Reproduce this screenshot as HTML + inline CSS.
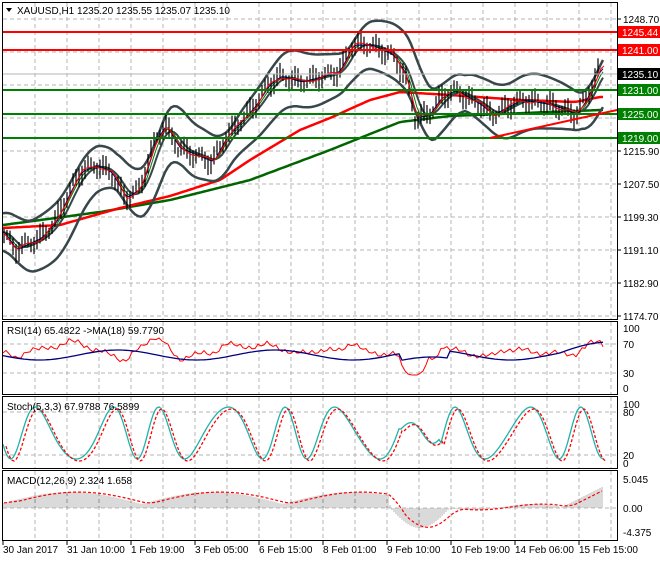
<!DOCTYPE html>
<html><head><meta charset="utf-8"><style>
html,body{margin:0;padding:0;background:#fff;}
body{width:660px;height:560px;overflow:hidden;font-family:"Liberation Sans",sans-serif;}
svg text{font-family:"Liberation Sans",sans-serif;font-size:10px;}
</style></head><body>
<svg id="c" width="660" height="560" xmlns="http://www.w3.org/2000/svg">
<rect width="660" height="560" fill="#fff"/>
<g id="grid" stroke="#b4b4b4" stroke-dasharray="4,3" stroke-width="1"></g>
<g id="plots"></g>
<line x1="3" y1="32" x2="617" y2="32" stroke="#f00" stroke-width="2"/>
<line x1="3" y1="50" x2="617" y2="50" stroke="#f00" stroke-width="2"/>
<line x1="3" y1="74" x2="617" y2="74" stroke="#b4b4b4" stroke-width="1"/>
<line x1="3" y1="90" x2="617" y2="90" stroke="#008000" stroke-width="2"/>
<line x1="3" y1="114" x2="617" y2="114" stroke="#008000" stroke-width="2"/>
<line x1="3" y1="138" x2="617" y2="138" stroke="#008000" stroke-width="2"/>
<line x1="490" y1="138" x2="617" y2="110" stroke="#f00" stroke-width="2"/>
<g fill="none" stroke="#000" stroke-width="1">
<rect x="2.5" y="2.5" width="615" height="317"/>
<rect x="2.5" y="321.5" width="615" height="73"/>
<rect x="2.5" y="396.5" width="615" height="72"/>
<rect x="2.5" y="470.5" width="615" height="70"/>
</g>
<path d="M6 8 L12 8 L9 12 Z" fill="#000"/>
<text x="17" y="14">XAUUSD,H1  1235.20 1235.55 1235.07 1235.10</text>
<text x="7" y="334">RSI(14) 65.4822  -&gt;MA(18) 59.7790</text>
<text x="7" y="410">Stoch(5,3,3) 67.9788 76.5899</text>
<text x="7" y="484">MACD(12,26,9) 2.324 1.658</text>
<g stroke="#000"><line x1="617" y1="19" x2="621" y2="19"/><line x1="617" y1="151" x2="621" y2="151"/><line x1="617" y1="184" x2="621" y2="184"/><line x1="617" y1="217" x2="621" y2="217"/><line x1="617" y1="250" x2="621" y2="250"/><line x1="617" y1="283" x2="621" y2="283"/><line x1="617" y1="316" x2="621" y2="316"/></g>
<g>
<text x="623" y="23">1248.70</text>
<text x="623" y="155">1215.90</text>
<text x="623" y="188">1207.50</text>
<text x="623" y="221">1199.30</text>
<text x="623" y="254">1191.10</text>
<text x="623" y="287">1182.90</text>
<text x="623" y="320">1174.70</text>
<rect x="618" y="26" width="42" height="12" fill="#f00"/><text x="622" y="36" fill="#fff">1245.44</text>
<rect x="618" y="44" width="42" height="12" fill="#f00"/><text x="622" y="54" fill="#fff">1241.00</text>
<rect x="618" y="68" width="42" height="12" fill="#000"/><text x="622" y="78" fill="#fff">1235.10</text>
<rect x="618" y="84" width="42" height="12" fill="#008000"/><text x="622" y="94" fill="#fff">1231.00</text>
<rect x="618" y="108" width="42" height="12" fill="#008000"/><text x="622" y="118" fill="#fff">1225.00</text>
<rect x="618" y="132" width="42" height="12" fill="#008000"/><text x="622" y="142" fill="#fff">1219.00</text>
<text x="623" y="332">100</text><text x="623" y="348">70</text><text x="623" y="377">30</text><text x="623" y="392">0</text>
<text x="623" y="408">100</text><text x="623" y="416">80</text><text x="623" y="459">20</text><text x="623" y="467">0</text>
<text x="623" y="483">5.045</text><text x="623" y="512">0.00</text><text x="623" y="536">-4.375</text>
</g>
<g id="taxis"></g>
</svg>
<script>
var NS="http://www.w3.org/2000/svg";
function el(p,t,a){var e=document.createElementNS(NS,t);for(var k in a)e.setAttribute(k,a[k]);p.appendChild(e);return e;}
var grid=document.getElementById('grid'),plots=document.getElementById('plots'),tx=document.getElementById('taxis');
for(var x=35;x<617;x+=32){[[3,319],[322,394],[397,468],[471,540]].forEach(function(r){el(grid,'line',{x1:x,y1:r[0],x2:x,y2:r[1]});});}
[19,52,85,118,151,184,217,250,283,316,344,373,412,455,508].forEach(function(y){el(grid,'line',{x1:3,y1:y,x2:617,y2:y});});
var labs=["30 Jan 2017","31 Jan 10:00","1 Feb 19:00","3 Feb 05:00","6 Feb 15:00","8 Feb 01:00","9 Feb 10:00","10 Feb 19:00","14 Feb 06:00","15 Feb 15:00"];
labs.forEach(function(l,i){var x=3+i*64;el(tx,'line',{x1:x,y1:540,x2:x,y2:545,stroke:'#000'});var t=el(tx,'text',{x:x,y:553});t.textContent=l;});
function interp(K,x){if(x<=K[0][0])return K[0][1];for(var i=0;i<K.length-1;i++){if(x<=K[i+1][0]){var a=K[i],b=K[i+1];return a[1]+(b[1]-a[1])*(x-a[0])/(b[0]-a[0]);}}return K[K.length-1][1];}
var K=[[3,232],[15,250],[25,245],[40,238],[55,222],[70,190],[80,172],[95,165],[110,172],[125,198],[140,188],[155,140],[165,125],[178,148],[195,155],[212,162],[225,138],[240,122],[255,105],[268,85],[280,76],[300,82],[320,77],[338,72],[352,45],[370,45],[392,55],[405,75],[415,118],[428,115],[440,98],[455,90],[468,98],[480,105],[492,115],[505,108],[520,100],[535,102],[550,105],[565,110],[575,115],[585,100],[600,68]];
function P(x){return interp(K,x);}
function poly(pts,st,w,dash){var d=pts.map(function(p){return p[0].toFixed(1)+','+p[1].toFixed(1);}).join(' ');var a={points:d,fill:'none',stroke:st,'stroke-width':w};if(dash)a['stroke-dasharray']=dash;el(plots,'polyline',a);}
function sm(x,n){var s=0,c=0;for(var k=-n;k<=0;k+=2){s+=P(Math.max(3,x+k));c++;}return s/c;}
var GK=[[3,225],[100,212],[170,200],[250,180],[330,150],[400,122],[450,116],[600,110]];
var RK=[[3,228],[60,225],[120,208],[170,196],[220,180],[250,160],[300,130],[330,118],[370,100],[400,92],[450,95],[520,100],[575,102],[600,97]];
var red=[],grn=[];for(var x=3;x<=603;x+=3){red.push([x,interp(RK,x)]);grn.push([x,interp(GK,x)]);}
poly(grn,'#006400',2.5);poly(red,'#f00',2.5);
var up=[],lo=[],m1=[],m2=[],m3=[];for(var x=3;x<=603;x+=3){var m=sm(x,20);var w=18+10*Math.abs(Math.sin(x/37));up.push([x,m-w]);lo.push([x,m+w]);m1.push([x,sm(x,4)]);m2.push([x,sm(x,8)]);m3.push([x,sm(x,14)]);}
poly(up,'#37474a',2.5);poly(lo,'#37474a',2.5);poly(m3,'#37474a',2);poly(m2,'#008000',1);poly(m1,'#00008b',1);
for(var x=4;x<=600;x+=3){var c=P(x)+5*Math.sin(x*1.7);var h=5+5*Math.abs(Math.sin(x*0.9));el(plots,'line',{x1:x,y1:c-h,x2:x,y2:c+h,stroke:'#000','stroke-width':1.2});}
var rr=[];for(var x=3;x<=603;x+=3){rr.push([x+1,sm(x,2)+2*Math.sin(x*2.3)]);}poly(rr,'#f00',1);
var r1=[],r2=[];for(var x=3;x<=603;x+=3){var v=352+(P(x)-P(Math.max(3,x-14)))*0.35+2*Math.sin(x*0.7)+1.5*Math.sin(x*1.9);if(x>400&&x<440)v+=10;v=Math.max(338,Math.min(375,v));r1.push([x,v]);r2.push([x,355+5*Math.sin(x/25)+(x>400&&x<450?7:0)-(x>560?(x-560)*0.2:0)]);}
poly(r1,'#f00',1);poly(r2,'#000080',1.3);
var s1=[],s2=[];for(var x=3;x<=603;x+=2){var v=433+26*Math.sin(x/9.5+Math.sin(x/23))*(x>400&&x<440?0.4:1);v=Math.max(404,Math.min(462,v));s1.push([x,v]);}
for(var i=0;i<s1.length;i++){s2.push([s1[i][0]+3,s1[i][1]+2]);}
poly(s1,'#20b2aa',1.3);poly(s2,'#f00',1.3,'3,2');
var mac=[],sig=[];for(var x=4;x<=603;x+=2){var v=(x<390)?-12*Math.abs(Math.sin(x/45))-4:(x<560?-3*Math.sin(x/20)-1:-(x-560)*0.5);if(x>390&&x<450)v=20*Math.sin((x-390)/60*Math.PI);v=Math.max(-30,Math.min(25,v));el(plots,'line',{x1:x,y1:508,x2:x,y2:508+v,stroke:'#b4b4b4','stroke-width':1});mac.push([x,508+v]);}
for(var i=0;i<mac.length;i++){var s=0,c=0;for(var j=Math.max(0,i-8);j<=i;j++){s+=mac[j][1];c++;}sig.push([mac[i][0],s/c]);}
poly(sig,'#f00',1.2,'3,2');
</script>
</body></html>
